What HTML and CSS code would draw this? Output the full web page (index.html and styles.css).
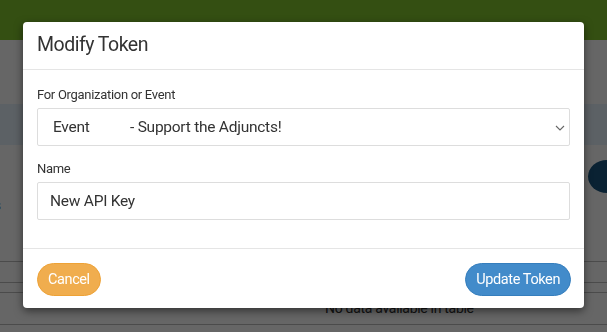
FILE: index.html
```html
<!DOCTYPE html>
<html lang="en">
<head>
    <meta charset="UTF-8">
    <meta name="viewport" content="width=device-width, initial-scale=1.0">
    <title>Modify Token</title>
    <link rel="stylesheet" href="styles.css">
</head>
<body>
    <div class="navbar"></div>
    <div class="page">
        <div class="info-band"></div>
        <div class="side-row">
            <span class="side-text">Tokens</span>
            <span class="round-btn"></span>
        </div>
        <div class="table">
            <div class="table-row"></div>
            <div class="table-row thin"></div>
            <div class="table-empty">No data available in table</div>
        </div>
    </div>

    <!-- Modal -->
    <div class="backdrop"></div>
    <div class="modal">
        <div class="modal-header">
            <h4 class="modal-title">Modify Token</h4>
        </div>
        <div class="modal-body">
            <div class="form-group">
                <label>For Organization or Event</label>
                <div class="select">
                    <span class="opt-type">Event</span>
                    <span class="opt-name">- Support the Adjuncts!</span>
                    <svg class="chevron" width="10" height="6" viewBox="0 0 10 6">
                        <path d="M1 1 L5 5 L9 1" fill="none" stroke="#666" stroke-width="1.1"/>
                    </svg>
                </div>
            </div>
            <div class="form-group">
                <label>Name</label>
                <div class="input">New API Key</div>
            </div>
        </div>
        <div class="modal-footer">
            <button class="btn btn-warning">Cancel</button>
            <button class="btn btn-primary">Update Token</button>
        </div>
    </div>
</body>
</html>
```

FILE: styles.css
```css
body {
    margin: 0;
    padding: 0;
    width: 607px;
    height: 332px;
    overflow: hidden;
    background-color: #fff;
    font-family: Roboto, "Liberation Sans", Arial, sans-serif;
    color: #333;
}
.navbar {
    height: 40px;
    background-color: #83c62e;
}
.page {
    padding-top: 64px;
}
.info-band {
    height: 41px;
    background-color: #e6f2fc;
}
.side-row {
    display: flex;
    justify-content: space-between;
    align-items: center;
    height: 116px;
}
.side-text {
    margin-left: -44px;
    margin-top: 4px;
    font-size: 14px;
}
.round-btn {
    width: 38px;
    height: 33px;
    margin-right: -19px;
    margin-top: -54px;
    border-radius: 50%;
    background-color: #19567f;
}
.table-row {
    height: 20px;
    border-top: 1px solid #bbb;
}
.table-row.thin {
    height: 9px;
}
.table-empty {
    border-top: 1px solid #bbb;
    border-bottom: 1px solid #bbb;
    height: 31px;
    line-height: 31px;
    padding-left: 325px;
    font-size: 14px;
    letter-spacing: -0.3px;
}

/* Modal */
.backdrop {
    position: fixed;
    left: 0;
    top: 0;
    width: 100%;
    height: 100%;
    background-color: rgba(0,0,0,0.6);
}
.modal {
    position: absolute;
    left: 23px;
    top: 22px;
    width: 561px;
    background-color: #fff;
    border-radius: 4px;
    box-shadow: 0 3px 9px rgba(0,0,0,0.5);
}
.modal-header {
    padding: 11px 14px 12px;
    border-bottom: 1px solid #e5e5e5;
}
.modal-title {
    margin: 0;
    font-size: 19.5px;
    font-weight: 400;
    line-height: 24px;
    letter-spacing: -0.5px;
    color: #333;
}
.modal-body {
    padding: 17px 14px 13px;
}
.form-group {
    margin-bottom: 15px;
}
.form-group label {
    display: block;
    font-size: 13px;
    line-height: 16px;
    letter-spacing: -0.3px;
    margin-bottom: 5px;
}
.select,
.input {
    position: relative;
    display: flex;
    align-items: center;
    height: 36px;
    border: 1px solid #ddd;
    border-radius: 2px;
    font-size: 15.5px;
    letter-spacing: -0.25px;
    color: #333;
}
.select {
    padding-left: 15px;
}
.opt-type {
    width: 77px;
}
.chevron {
    position: absolute;
    right: 4px;
    top: 16px;
}
.input {
    padding-left: 12px;
}
.modal-footer {
    display: flex;
    justify-content: space-between;
    padding: 14px 13px 12px 14px;
    border-top: 1px solid #e5e5e5;
}
.btn {
    height: 33px;
    padding: 0 10px;
    font-family: Roboto, "Liberation Sans", Arial, sans-serif;
    font-size: 14.5px;
    letter-spacing: -0.4px;
    color: #fff;
    border: 1px solid transparent;
    border-radius: 17px;
    cursor: pointer;
}
.btn-warning {
    background-color: #f0ad4e;
    border-color: #eea236;
}
.btn-primary {
    background-color: #428bca;
    border-color: #357ebd;
}
```
